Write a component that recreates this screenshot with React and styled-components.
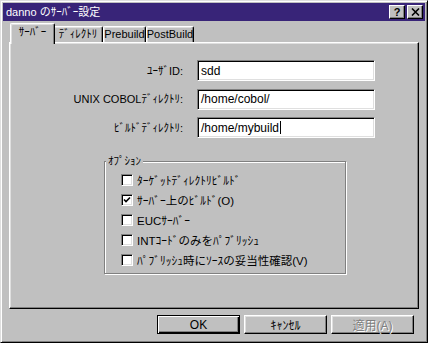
import React from 'react';
import styled, { createGlobalStyle } from 'styled-components';

const GlobalStyle = createGlobalStyle`
  html, body {
    margin: 0;
    padding: 0;
    background: #c0c0c0;
  }
  body {
    font-family: "Liberation Sans", "Noto Sans CJK JP", sans-serif;
    font-size: 12px;
    color: #000;
  }
`;

const Window = styled.div`
  box-sizing: border-box;
  width: 428px;
  height: 343px;
  background: #c0c0c0;
  border: 1px solid;
  border-color: #dfdfdf #000 #000 #dfdfdf;
  box-shadow: inset 1px 1px #fff, inset -1px -1px #808080;
  padding: 2px;
  display: flex;
  flex-direction: column;
`;

const TitleBar = styled.div`
  height: 18px;
  background: #382478;
  display: flex;
  align-items: center;
  padding: 0 2px 0 3px;
  color: #fff;
`;

const TitleText = styled.div`
  flex: 1;
  font-size: 11px;
  line-height: 18px;
  white-space: nowrap;
`;

const TitleButton = styled.div`
  box-sizing: border-box;
  width: 16px;
  height: 14px;
  margin-left: 2px;
  background: #c0c0c0;
  border: 1px solid;
  border-color: #fff #000 #000 #fff;
  box-shadow: inset -1px -1px #808080;
  display: flex;
  align-items: center;
  justify-content: center;
  color: #000;
  font-weight: bold;
  font-size: 11px;
  line-height: 1;
`;

const Body = styled.div`
  display: flex;
  flex-direction: column;
  padding: 0 6px;
`;

const TabRow = styled.div`
  display: flex;
  align-items: flex-end;
  height: 19px;
  margin-top: 2px;
  padding-left: 3px;
`;

const Tab = styled.div`
  box-sizing: border-box;
  width: ${(p) => (p.$active ? p.$w + 4 : p.$w)}px;
  height: ${(p) => (p.$active ? 21 : 16)}px;
  margin: ${(p) => (p.$active ? '0 -2px -2px' : '0')};
  position: relative;
  z-index: ${(p) => (p.$active ? 2 : 1)};
  background: #c0c0c0;
  border-top: 1px solid #fff;
  border-left: 1px solid #fff;
  border-right: 1px solid #000;
  border-radius: 2px 2px 0 0;
  box-shadow: inset -1px 0 #808080, inset 1px 1px #dfdfdf;
  display: flex;
  justify-content: center;
  padding-top: ${(p) => (p.$active ? 2 : 1)}px;
  font-size: 11px;
  line-height: 13px;
  white-space: nowrap;
`;

const Panel = styled.div`
  box-sizing: border-box;
  height: 267px;
  border: 1px solid;
  border-color: #fff #000 #000 #fff;
  box-shadow: inset -1px -1px #808080, inset 1px 1px #dfdfdf;
  padding-top: 17px;
`;

const FieldGrid = styled.div`
  display: grid;
  grid-template-columns: 173px 178px;
  column-gap: 14px;
  row-gap: 7.5px;
`;

const FieldLabel = styled.div`
  align-self: center;
  text-align: right;
  font-size: 11px;
  white-space: nowrap;
  line-height: 14px;
`;

const TextField = styled.div`
  box-sizing: border-box;
  height: 21px;
  background: #fff;
  border: 1px solid;
  border-color: #808080 #fff #fff #808080;
  box-shadow: inset 1px 1px #000, inset -1px -1px #dfdfdf;
  padding: 0 3px;
  display: flex;
  align-items: center;
  font-size: 12px;
  white-space: nowrap;
`;

const Caret = styled.span`
  display: inline-block;
  width: 1px;
  height: 13px;
  background: #000;
  margin-left: 1px;
`;

const Group = styled.fieldset`
  box-sizing: border-box;
  width: 242px;
  height: 120px;
  margin: 16px 0 0 94px;
  padding: 0;
  border: 1px solid #808080;
  box-shadow: 1px 1px 0 #fff, inset 1px 1px 0 #fff;
`;

const Legend = styled.legend`
  margin-left: 1px;
  padding: 0 2px;
  background: #c0c0c0;
  font-size: 11px;
  line-height: 14px;
`;

const OptionList = styled.div`
  display: flex;
  flex-direction: column;
  padding: 2px 0 0 16px;
`;

const OptionRow = styled.div`
  height: 20px;
  display: flex;
  align-items: center;
  gap: 4px;
  font-size: 11.5px;
  white-space: nowrap;
`;

const Box = styled.span`
  box-sizing: border-box;
  width: 12px;
  height: 12px;
  background: #fff;
  border: 1px solid;
  border-color: #808080 #fff #fff #808080;
  box-shadow: inset 1px 1px #000, inset -1px -1px #dfdfdf;
  display: flex;
  align-items: center;
  justify-content: center;
`;

const ButtonRow = styled.div`
  display: flex;
  justify-content: flex-end;
  gap: 4px;
  margin-top: 6px;
  padding-right: 5px;
`;

const Button = styled.div`
  box-sizing: border-box;
  width: 83px;
  height: 19px;
  border: 1px solid;
  border-color: ${(p) => (p.$default ? '#000' : '#fff #000 #000 #fff')};
  box-shadow: ${(p) =>
    p.$default
      ? 'inset 1px 1px #fff, inset -1px -1px #000, inset -2px -2px #808080'
      : 'inset -1px -1px #808080, inset 1px 1px #dfdfdf'};
  display: flex;
  align-items: center;
  justify-content: center;
  font-size: 12px;
  color: ${(p) => (p.$disabled ? '#808080' : '#000')};
  text-shadow: ${(p) => (p.$disabled ? '1px 1px #fff' : 'none')};
`;

const Check = () => (
  <svg width="8" height="8" viewBox="0 0 8 8">
    <path d="M1 3.5 L3 5.5 L7 1.5" stroke="#000" strokeWidth="1.6" fill="none" />
  </svg>
);

const CloseGlyph = () => (
  <svg width="9" height="8" viewBox="0 0 9 8">
    <path d="M1 0.5 L8 7.5 M8 0.5 L1 7.5" stroke="#000" strokeWidth="1.6" />
  </svg>
);

const tabs = [
  { label: 'ｻｰﾊﾞｰ', w: 41, active: true },
  { label: 'ﾃﾞｨﾚｸﾄﾘ', w: 50 },
  { label: 'Prebuild', w: 43 },
  { label: 'PostBuild', w: 48 },
];

const fields = [
  { label: 'ﾕｰｻﾞID:', value: 'sdd' },
  { label: 'UNIX COBOLﾃﾞｨﾚｸﾄﾘ:', value: '/home/cobol/' },
  { label: 'ﾋﾞﾙﾄﾞﾃﾞｨﾚｸﾄﾘ:', value: '/home/mybuild', caret: true },
];

const options = [
  { label: 'ﾀｰｹﾞｯﾄﾃﾞｨﾚｸﾄﾘﾋﾞﾙﾄﾞ' },
  { label: 'ｻｰﾊﾞｰ上のﾋﾞﾙﾄﾞ(O)', checked: true },
  { label: 'EUCｻｰﾊﾞｰ' },
  { label: 'INTｺｰﾄﾞのみをﾊﾟﾌﾞﾘｯｼｭ' },
  { label: 'ﾊﾟﾌﾞﾘｯｼｭ時にｿｰｽの妥当性確認(V)' },
];

export default function App() {
  return (
    <>
      <GlobalStyle />
      <Window>
        <TitleBar>
          <TitleText>danno のｻｰﾊﾞｰ設定</TitleText>
          <TitleButton>?</TitleButton>
          <TitleButton>
            <CloseGlyph />
          </TitleButton>
        </TitleBar>
        <Body>
          <TabRow>
            {tabs.map((t) => (
              <Tab key={t.label} $w={t.w} $active={t.active}>
                {t.label}
              </Tab>
            ))}
          </TabRow>
          <Panel>
            <FieldGrid>
              {fields.map((f) => (
                <React.Fragment key={f.label}>
                  <FieldLabel>{f.label}</FieldLabel>
                  <TextField>
                    {f.value}
                    {f.caret && <Caret />}
                  </TextField>
                </React.Fragment>
              ))}
            </FieldGrid>
            <Group>
              <Legend>ｵﾌﾟｼｮﾝ</Legend>
              <OptionList>
                {options.map((o) => (
                  <OptionRow key={o.label}>
                    <Box>{o.checked && <Check />}</Box>
                    {o.label}
                  </OptionRow>
                ))}
              </OptionList>
            </Group>
          </Panel>
          <ButtonRow>
            <Button $default>OK</Button>
            <Button>ｷｬﾝｾﾙ</Button>
            <Button $disabled>適用(A)</Button>
          </ButtonRow>
        </Body>
      </Window>
    </>
  );
}
